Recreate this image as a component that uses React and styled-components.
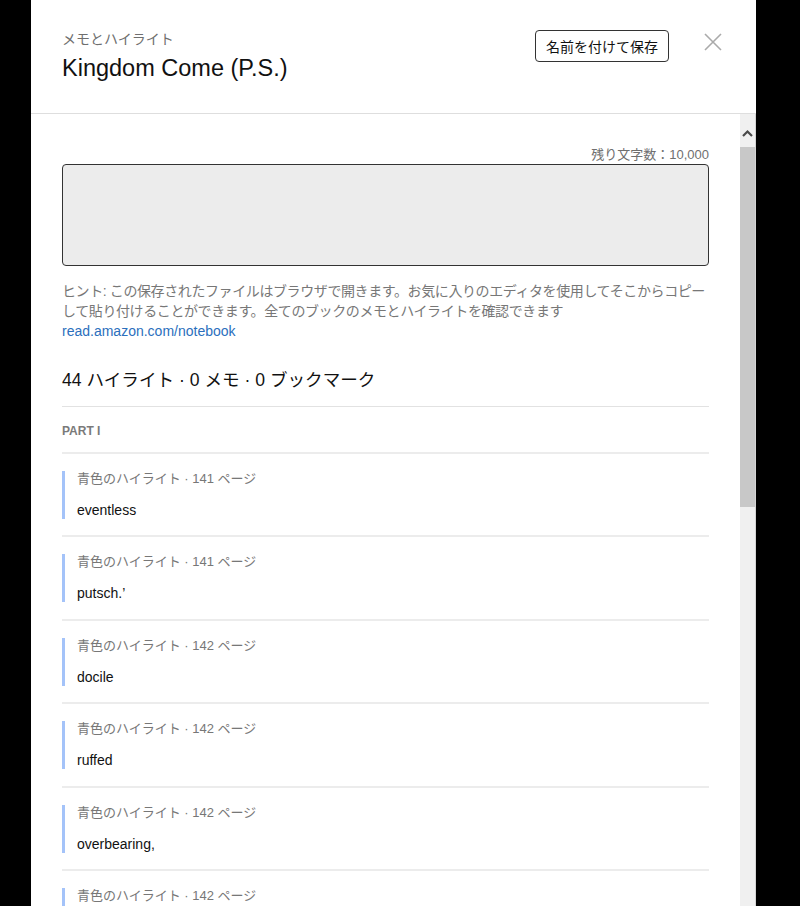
import React from "react";
import styled, { createGlobalStyle } from "styled-components";

const Global = createGlobalStyle`
  html, body { margin: 0; padding: 0; background: #000; overflow: hidden; }
  body { font-family: "Liberation Sans", "Noto Sans CJK JP", sans-serif; }
  * { box-sizing: border-box; }
`;

const Panel = styled.div`
  margin-left: 31px;
  width: 725px;
  height: 1000px;
  background: #fff;
  display: flex;
  flex-direction: column;
`;

const Header = styled.header`
  display: flex;
  justify-content: space-between;
  align-items: flex-start;
  padding: 30px 34px 31px 31px;
  border-bottom: 1px solid #dedede;
  flex: none;
`;

const TitleBlock = styled.div`
  display: flex;
  flex-direction: column;
  gap: 6px;
`;

const Eyebrow = styled.div`
  font-size: 14px;
  line-height: 18px;
  color: #6f6f6f;
`;

const Title = styled.h1`
  margin: 0;
  font-size: 23.5px;
  line-height: 28px;
  font-weight: 400;
  color: #111;
`;

const Actions = styled.div`
  display: flex;
  align-items: flex-start;
  gap: 35px;
`;

const SaveButton = styled.button`
  height: 32px;
  padding: 0 10px;
  border: 1px solid #333;
  border-radius: 4px;
  background: #fff;
  color: #111;
  font-family: inherit;
  font-size: 14px;
  cursor: pointer;
`;

const CloseButton = styled.button`
  margin-top: 3px;
  width: 18px;
  height: 18px;
  padding: 0;
  border: 0;
  background: none;
  display: flex;
  cursor: pointer;
`;

const BodyArea = styled.div`
  flex: 1;
  min-height: 0;
  display: flex;
`;

const Content = styled.div`
  flex: 1;
  min-width: 0;
  overflow: hidden;
  padding: 33px 31px 20px 31px;
`;

const ScrollRail = styled.div`
  flex: none;
  width: 16px;
  background: #f0f0f0;
  border-right: 1px solid #d4d4d4;
  display: flex;
  flex-direction: column;
`;

const ScrollArrow = styled.div`
  height: 33px;
  display: flex;
  justify-content: center;
  padding: 15px 1px 0 0;
`;

const ScrollThumb = styled.div`
  height: 360px;
  background: #c8c8c8;
`;

const Counter = styled.div`
  text-align: right;
  font-size: 13px;
  line-height: 16px;
  color: #6f6f6f;
  margin-bottom: 1px;
`;

const NoteArea = styled.textarea`
  display: block;
  width: 100%;
  height: 102px;
  resize: none;
  background: #ececec;
  border: 1px solid #333;
  border-radius: 4px;
  font-family: inherit;
  font-size: 14px;
  padding: 8px;
`;

const Hint = styled.p`
  margin: 15px 0 0;
  font-size: 14px;
  line-height: 20px;
  color: #777;
  letter-spacing: -0.4px;
`;

const Link = styled.a`
  color: #2b6fbd;
  text-decoration: none;
  letter-spacing: 0;
`;

const Summary = styled.h2`
  margin: 27px 0 0;
  font-size: 17.6px;
  line-height: 24px;
  font-weight: 400;
  color: #111;
  padding-bottom: 14px;
  border-bottom: 1px solid #e2e2e2;
`;

const Section = styled.div`
  padding: 16px 0 13px;
  font-size: 12px;
  line-height: 16px;
  font-weight: 700;
  color: #7a7a7a;
  text-transform: uppercase;
  border-bottom: 2px solid #ececec;
`;

const Item = styled.div`
  padding: 17px 0 16.4px;
  border-bottom: 2px solid #ececec;
`;

const Quote = styled.div`
  border-left: 3px solid ${(p) => p.$color};
  padding-left: 12px;
`;

const Meta = styled.div`
  font-size: 13px;
  line-height: 16px;
  color: #777;
`;

const Body = styled.div`
  margin-top: 14px;
  font-size: 14px;
  line-height: 18px;
  color: #111;
`;

const highlights = [
  ["141", "eventless"],
  ["141", "putsch.’"],
  ["142", "docile"],
  ["142", "ruffed"],
  ["142", "overbearing,"],
  ["142", "obstinate"],
  ["143", "sallow"],
  ["143", "aloof"],
];

const CloseIcon = () => (
  <svg width="18" height="18" viewBox="0 0 18 18">
    <path d="M1 1L17 17M17 1L1 17" stroke="#aaa" strokeWidth="1.6" fill="none" />
  </svg>
);

const UpChevron = () => (
  <svg width="11" height="8" viewBox="0 0 11 8">
    <path d="M1 7L5.5 2.5L10 7" fill="none" stroke="#4a4a4a" strokeWidth="2.2" />
  </svg>
);

export default function App() {
  return (
    <>
      <Global />
      <Panel>
        <Header>
          <TitleBlock>
            <Eyebrow>メモとハイライト</Eyebrow>
            <Title>Kingdom Come (P.S.)</Title>
          </TitleBlock>
          <Actions>
            <SaveButton>名前を付けて保存</SaveButton>
            <CloseButton aria-label="閉じる">
              <CloseIcon />
            </CloseButton>
          </Actions>
        </Header>
        <BodyArea>
          <Content>
            <Counter>残り文字数：10,000</Counter>
            <NoteArea />
            <Hint>
              ヒント: この保存されたファイルはブラウザで開きます。お気に入りのエディタを使用してそこからコピーして貼り付けることができます。全てのブックのメモとハイライトを確認できます
              <br />
              <Link href="#">read.amazon.com/notebook</Link>
            </Hint>
            <Summary>44 ハイライト · 0 メモ · 0 ブックマーク</Summary>
            <Section>Part I</Section>
            {highlights.map(([page, text], i) => (
              <Item key={i}>
                <Quote $color="#a4c3f9">
                  <Meta>青色のハイライト · {page} ページ</Meta>
                  <Body>{text}</Body>
                </Quote>
              </Item>
            ))}
          </Content>
          <ScrollRail>
            <ScrollArrow>
              <UpChevron />
            </ScrollArrow>
            <ScrollThumb />
          </ScrollRail>
        </BodyArea>
      </Panel>
    </>
  );
}
